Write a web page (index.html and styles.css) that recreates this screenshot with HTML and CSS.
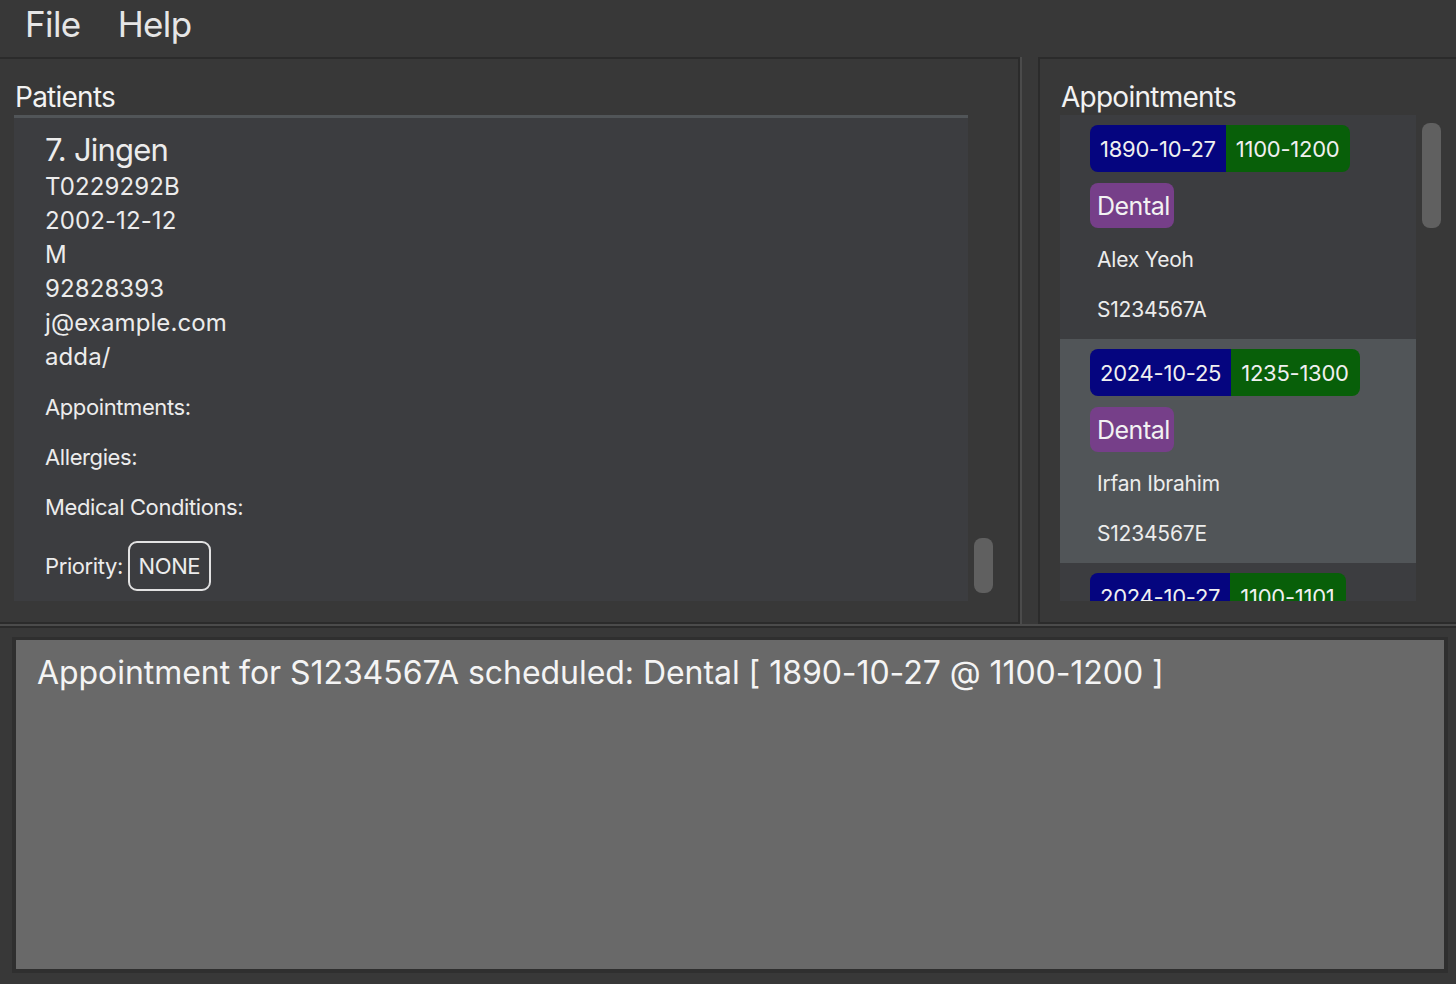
FILE: index.html
```html
<!DOCTYPE html>
<html lang="en">
<head>
<meta charset="utf-8">
<title>Clinic</title>
<link rel="stylesheet" href="styles.css">
</head>
<body>
<div class="app">
  <nav class="menubar">
    <span class="menu-item">File</span>
    <span class="menu-item">Help</span>
  </nav>
  <div class="main">
    <section class="panel panel-left">
      <h2 class="panel-title">Patients</h2>
      <div class="list-row">
        <div class="list list-patients">
          <div class="prev-cell"></div>
          <div class="patient-cell">
            <div class="patient-name">7. Jingen</div>
            <div class="patient-line">T0229292B</div>
            <div class="patient-line">2002-12-12</div>
            <div class="patient-line">M</div>
            <div class="patient-line">92828393</div>
            <div class="patient-line">j@example.com</div>
            <div class="patient-line">adda/</div>
            <div class="patient-block first">Appointments:</div>
            <div class="patient-block">Allergies:</div>
            <div class="patient-block">Medical Conditions:</div>
            <div class="priority-row">
              <span class="priority-label">Priority:</span>
              <span class="priority-badge">NONE</span>
            </div>
          </div>
        </div>
        <div class="scroll-track track-left"><div class="thumb thumb-left"></div></div>
      </div>
    </section>
    <div class="vdivider"></div>
    <section class="panel panel-right">
      <h2 class="panel-title title-right">Appointments</h2>
      <div class="list-row">
        <div class="list list-appts">
          <div class="appt-cell">
            <div class="tag-row">
              <span class="tag tag-date">1890-10-27</span><span class="tag tag-time">1100-1200</span>
            </div>
            <div class="tag-type-row"><span class="tag-type">Dental</span></div>
            <div class="appt-text">Alex Yeoh</div>
            <div class="appt-text">S1234567A</div>
          </div>
          <div class="appt-cell selected">
            <div class="tag-row">
              <span class="tag tag-date">2024-10-25</span><span class="tag tag-time">1235-1300</span>
            </div>
            <div class="tag-type-row"><span class="tag-type">Dental</span></div>
            <div class="appt-text">Irfan Ibrahim</div>
            <div class="appt-text">S1234567E</div>
          </div>
          <div class="appt-cell">
            <div class="tag-row">
              <span class="tag tag-date">2024-10-27</span><span class="tag tag-time">1100-1101</span>
            </div>
          </div>
        </div>
        <div class="scroll-track track-right"><div class="thumb thumb-right"></div></div>
      </div>
    </section>
  </div>
  <div class="hdivider"></div>
  <div class="bottom">
    <div class="result-box">
      <p class="result-text">Appointment for S1234567A scheduled: Dental [ 1890-10-27 @ 1100-1200 ]</p>
    </div>
  </div>
</div>
</body>
</html>
```
FILE: styles.css
```css
* { box-sizing: border-box; }
html, body {
  margin: 0;
  padding: 0;
  background: #383838;
}
body {
  font-family: "Inter", "Liberation Sans", sans-serif;
  color: #ececec;
  width: 1456px;
  height: 984px;
  overflow: hidden;
}
.app {
  display: flex;
  flex-direction: column;
  height: 984px;
}

/* Menu bar */
.menubar {
  height: 57px;
  display: flex;
  align-items: flex-start;
  padding: 2px 0 0 25px;
  gap: 37px;
  background: #383838;
}
.menu-item {
  font-size: 35px;
  line-height: 44px;
  color: #e6e6e6;
  letter-spacing: -0.6px;
}

/* Main split */
.main {
  display: flex;
  height: 567px;
}
.panel {
  border-top: 2px solid #2b2b2b;
  display: flex;
  flex-direction: column;
  background: #383838;
}
.panel-left {
  width: 1020px;
  border-right: 2px solid #2b2b2b;
  border-bottom: 2px solid #2b2b2b;
  padding: 21px 0 0 14px;
}
.vdivider {
  width: 18px;
  border-left: 2px solid #4b4b4b;
  background: #383838;
}
.panel-right {
  flex: 1;
  border-left: 2px solid #2b2b2b;
  border-bottom: 2px solid #2b2b2b;
  padding: 21px 0 0 20px;
}
.panel-title {
  margin: 0 0 1px 1px;
  font-weight: 400;
  font-size: 28px;
  line-height: 34px;
  color: #f2f2f2;
  letter-spacing: -0.75px;
}
.list-row {
  display: flex;
  height: 486px;
}
.list {
  background: #3c3d40;
  overflow: hidden;
  height: 486px;
}
.list-patients { width: 954px; }
.list-appts { width: 356px; }

.scroll-track {
  display: flex;
  flex-direction: column;
}
.track-left {
  margin-left: 6px;
  width: 19px;
  justify-content: flex-end;
  padding-bottom: 8px;
}
.track-right {
  margin-left: 6px;
  width: 19px;
  padding-top: 8px;
}
.thumb {
  width: 19px;
  background: #606060;
  border-radius: 8px;
}
.thumb-left { height: 55px; }
.thumb-right { height: 105px; }

/* Patient cell */
.prev-cell {
  height: 3px;
  background: #515558;
}
.patient-cell {
  padding: 12px 0 0 31px;
}
.patient-name {
  font-size: 31px;
  line-height: 40px;
  letter-spacing: -0.8px;
}
.patient-line {
  font-size: 24px;
  line-height: 34px;
  letter-spacing: 0.1px;
}
.patient-block {
  font-size: 22px;
  line-height: 50px;
  letter-spacing: -0.4px;
}
.patient-block.first { margin-top: 8px; }
.priority-row {
  display: flex;
  align-items: center;
  gap: 5px;
  margin-top: 9px;
}
.priority-label {
  font-size: 22px;
  letter-spacing: -0.4px;
}
.priority-badge {
  display: inline-flex;
  align-items: center;
  justify-content: center;
  width: 83px;
  height: 50px;
  border: 2px solid #e2e2e2;
  border-radius: 9px;
  font-size: 22px;
  letter-spacing: -0.4px;
}

/* Appointment cells */
.appt-cell {
  height: 224px;
  padding: 10px 0 0 30px;
}
.appt-cell.selected { background: #515558; }
.tag-row {
  display: flex;
  height: 47px;
}
.tag {
  display: inline-flex;
  align-items: center;
  height: 47px;
  font-size: 22px;
  color: #f0f0f0;
  letter-spacing: -0.25px;
}
.tag-date {
  background: #05057f;
  border-radius: 8px 0 0 8px;
  padding: 0 10px;
}
.tag-time {
  background: #085f09;
  border-radius: 0 8px 8px 0;
  padding: 0 11px 0 10px;
}
.tag-type-row {
  display: flex;
  margin-top: 11px;
}
.tag-type {
  display: inline-flex;
  align-items: center;
  height: 45px;
  padding: 0 4px 0 7px;
  background: #763f89;
  border-radius: 8px;
  font-size: 25px;
  letter-spacing: -0.5px;
  color: #f2f2f2;
}
.appt-text {
  font-size: 21px;
  line-height: 50px;
  padding-left: 7px;
  letter-spacing: -0.2px;
}
.tag-type-row + .appt-text { margin-top: 7px; }

/* Horizontal divider */
.hdivider {
  height: 2px;
  background: #4b4b4b;
}

/* Bottom result */
.bottom {
  flex: 1;
  border-top: 2px solid #2b2b2b;
  padding: 9px 8px 11px 12px;
}
.result-box {
  height: 100%;
  border: 4px solid #2f2f2f;
  border-top-width: 3px;
  background: #696969;
  padding: 13px 21px;
}
.result-text {
  margin: 0;
  font-size: 32px;
  line-height: 40px;
  color: #f4f4f4;
  letter-spacing: -0.05px;
}
```
